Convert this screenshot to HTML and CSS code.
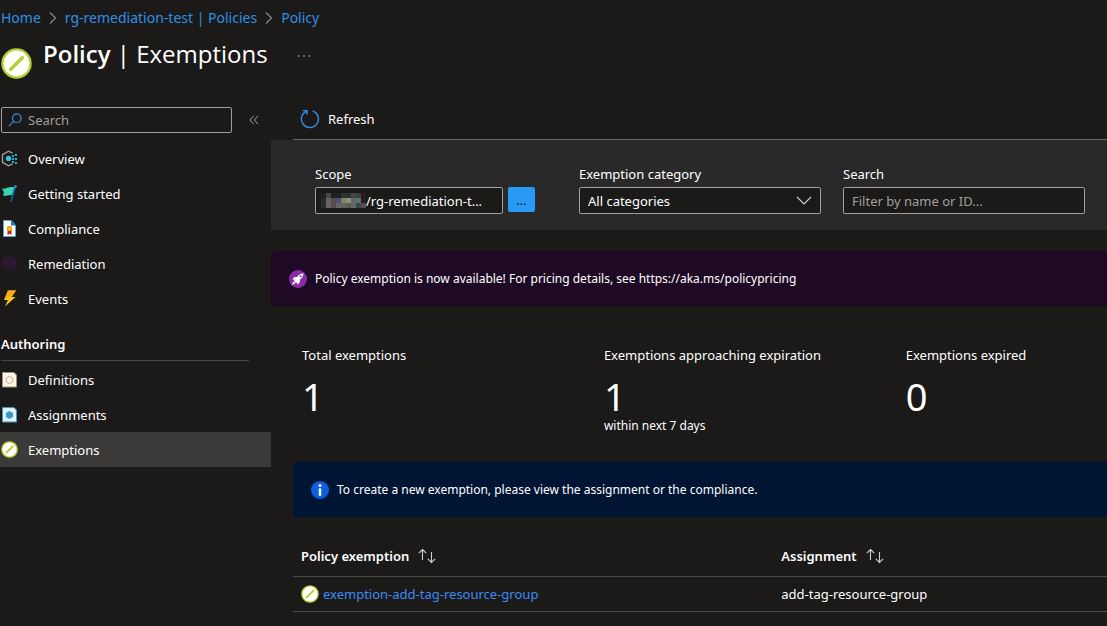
FILE: index.html
```html
<!DOCTYPE html>
<html lang="en">
<head>
<meta charset="utf-8">
<title>Policy | Exemptions</title>
<link rel="stylesheet" href="styles.css">
</head>
<body>
<svg class="defs" aria-hidden="true">
  <symbol id="exemption" viewBox="0 0 32 32">
    <circle cx="16" cy="16" r="14.500" fill="#fff" stroke="#b4cf30" stroke-width="2.400"/>
    <path d="M10 22 22 10" stroke="#b4cf30" stroke-width="3.600" stroke-linecap="round"/>
  </symbol>
  <symbol id="chevron" viewBox="0 0 8 14">
    <path d="M1 1.500 6.500 7 1 12.500" fill="none" stroke="#8a8886" stroke-width="1.200"/>
  </symbol>
  <symbol id="sort" viewBox="0 0 18 16">
    <path d="M4.500 12V1.500M.8 5.200 4.500 1.500 8.200 5.200M13.500 4v10.500M9.800 10.800l3.700 3.700 3.700-3.700" fill="none" stroke="#d2d0ce" stroke-width="1.100"/>
  </symbol>
</svg>
<header class="header">
  <nav class="breadcrumb" aria-label="Breadcrumb">
    <a href="#">Home</a>
    <svg class="crumb-sep"><use href="#chevron"/></svg>
    <a href="#">rg-remediation-test | Policies</a>
    <svg class="crumb-sep"><use href="#chevron"/></svg>
    <a href="#">Policy</a>
  </nav>
  <div class="title-row">
    <svg class="title-icon"><use href="#exemption"/></svg>
    <h1 class="title"><strong>Policy</strong> | Exemptions</h1>
    <button class="more" type="button" aria-label="More">
      <svg width="14" height="4" viewBox="0 0 14 4" fill="#d2d0ce"><circle cx="2" cy="2" r=".8"/><circle cx="7" cy="2" r=".8"/><circle cx="12" cy="2" r=".8"/></svg>
    </button>
  </div>
</header>
<div class="layout">
  <aside class="sidebar">
    <div class="menu-search">
      <label class="search-box">
        <svg width="14" height="14" viewBox="0 0 14 14" fill="none" stroke="#2f8fe6" stroke-width="1.200"><circle cx="8.800" cy="5.200" r="4.300"/><path d="M5.700 8.300.8 13.200"/></svg>
        <input type="text" placeholder="Search" aria-label="Search menu">
      </label>
      <button class="collapse" type="button" aria-label="Collapse menu">
        <svg width="10" height="10" viewBox="0 0 10 10" fill="none" stroke="#a19f9d"><path d="M4.800.8.8 5l4 4.200M9.200.8 5.200 5l4 4.200"/></svg>
      </button>
    </div>
    <nav aria-label="Policy menu">
      <ul class="menu">
        <li><a href="#">
          <svg class="icon" viewBox="0 0 17 17"><path d="M11 3.500V3L7.500 1.200 1.500 4.700v7.600l6 3.500L11 14v-.5" fill="none" stroke="#a3a3a3" stroke-width="1.300"/><circle cx="7.500" cy="8.500" r="2.700" fill="#32bedd"/><g fill="#2ba9cf"><rect x="11" y="5" width="2" height="2"/><rect x="14" y="4" width="2" height="2"/><rect x="11" y="8" width="2" height="2"/><rect x="14" y="8" width="2" height="2"/><rect x="11" y="11" width="2" height="2"/><rect x="14" y="12" width="2" height="2"/></g></svg>
          Overview</a></li>
        <li><a href="#">
          <svg class="icon" viewBox="0 0 17 17"><path d="M1 3.500c4 .8 6-2.500 12.500-1.300l-2.300 8c-3.500-1-6 1.500-9.200.3l1-3.200z" fill="#35d5b5"/><path d="M14.300 1.500 10 16.500" stroke="#1267b4" stroke-width="1.500"/><circle cx="14.500" cy="1.500" r="1.300" fill="#3b94df"/></svg>
          Getting started</a></li>
        <li><a href="#">
          <svg class="icon" viewBox="0 0 17 17"><path d="M2.500.5h8l4 5v11h-12z" fill="#fff" stroke="#5ea0d8"/><path d="M10 0 15 5.500h-5z" fill="#1d78cd"/><path d="M6.500 9h4v6l-2-1.200-2 1.200z" fill="#c3202f"/><circle cx="8.500" cy="8.500" r="2.700" fill="#f59a1b"/><circle cx="8.500" cy="8.500" r="1.200" fill="#ffca2a"/></svg>
          Compliance</a></li>
        <li><a href="#">
          <svg class="icon" viewBox="0 0 17 17"><circle cx="8.500" cy="8.500" r="8.300" fill="#29192c"/><path d="m2 4 6 4.500L15 4v6l-3-2-3.500 3L5 8l-3 3z" fill="#351539"/></svg>
          Remediation</a></li>
        <li><a href="#">
          <svg class="icon" viewBox="0 0 17 17"><path d="M7 .5h8L10.500 7h4L4 16.500 7 10H3z" fill="#fcc419"/><path d="M7 .5h8L10.500 7H4.300z" fill="#fca51d"/></svg>
          Events</a></li>
      </ul>
      <h2 class="menu-heading">Authoring</h2>
      <ul class="menu">
        <li><a href="#">
          <svg class="icon" viewBox="0 0 17 17"><path d="M1.500 1.500h11.500l2.500 2.500v12h-14z" fill="#fff4dc" stroke="#989287"/><path d="m8.500 5.300 3.200 1.900v3.700l-3.200 1.900-3.200-1.900V7.200z" fill="none" stroke="#b7b1a3"/></svg>
          Definitions</a></li>
        <li><a href="#">
          <svg class="icon" viewBox="0 0 17 17"><path d="M1.500 1.500h11.500l2.500 2.500v12h-14z" fill="#ddf1f8" stroke="#4796ba"/><path d="m8.500 5 3.500 2v4l-3.500 2L5 11V7z" fill="#3999c6"/></svg>
          Assignments</a></li>
        <li><a href="#" class="selected" aria-current="page">
          <svg class="icon"><use href="#exemption"/></svg>
          Exemptions</a></li>
      </ul>
    </nav>
  </aside>
  <main class="main">
    <div class="toolbar">
      <button class="refresh" type="button">
        <svg width="20" height="20" viewBox="0 0 20 20" fill="none" stroke="#2f8fe6" stroke-width="1.400"><path d="M12.500 1.900A8.500 8.500 0 1 1 6.300 2.300M2.800 1.600H7v4.200"/></svg>
        Refresh
      </button>
    </div>
    <form class="filters">
      <div class="field">
        <label for="scope">Scope</label>
        <div class="scope-row">
          <div class="box scope-box">
            <svg class="mosaic" width="45" height="15" viewBox="0 0 45 15" shape-rendering="crispEdges" aria-hidden="true">
              <path fill="#202022" d="M0 0h5v5H0zM10 0h10v5H10z"/><path fill="#494846" d="M5 0h5v5H5zM30 0h5v5h-5z"/><path fill="#2d332f" d="M20 0h5v5h-5z"/><path fill="#293338" d="M25 0h5v5h-5z"/><path fill="#3a4042" d="M35 0h5v5h-5z"/><path fill="#2b1c1e" d="M40 0h5v10h-5z"/>
              <path fill="#2a2b31" d="M0 5h5v10H0z"/><path fill="#67655e" d="M5 5h5v10H5zM20 10h5v5h-5z"/><path fill="#594b50" d="M10 5h5v10h-5zM40 10h5v5h-5z"/><path fill="#505370" d="M15 5h5v5h-5z"/><path fill="#7d806f" d="M20 5h5v5h-5z"/><path fill="#8f8e79" d="M25 5h5v5h-5z"/><path fill="#656766" d="M30 5h5v10h-5zM15 10h5v5h-5z"/><path fill="#5a7475" d="M35 5h5v5h-5z"/><path fill="#585d54" d="M25 10h5v5h-5z"/><path fill="#36464c" d="M35 10h5v5h-5z"/>
            </svg>
            <input id="scope" type="text" value="/rg-remediation-t..." readonly>
          </div>
          <button class="browse" type="button" aria-label="Select scope">...</button>
        </div>
      </div>
      <div class="field">
        <label for="category">Exemption category</label>
        <div class="select-wrap">
          <select id="category" class="box"><option>All categories</option></select>
          <svg class="select-arrow" width="16" height="9" viewBox="0 0 16 9" fill="none" stroke="#d2d0ce" stroke-width="1.100"><path d="m1 1 7 7 7-7"/></svg>
        </div>
      </div>
      <div class="field">
        <label for="filter">Search</label>
        <input id="filter" class="box" type="text" placeholder="Filter by name or ID...">
      </div>
    </form>
    <div class="banner promo">
      <svg width="18" height="18" viewBox="0 0 18 18"><circle cx="9" cy="9" r="9" fill="#8a2da5"/><path d="M14.500 3.300c-3 .2-5.200 1.700-6.400 3.600l-2.800.2-2 2.400 2.300.2-.8 1.400 1.900 1.900 1.400-.8.200 2.500 2.500-2.100.1-2.800c2-1.400 3.400-3.500 3.600-6.500zM4.200 11.600l-1.400 3.300 3.400-1.300z" fill="#fff"/><circle cx="11.500" cy="6.300" r="1" fill="#8a2da5"/></svg>
      <span>Policy exemption is now available! For pricing details, see https://aka.ms/policypricing</span>
    </div>
    <section class="stats">
      <div><div class="stat-label">Total exemptions</div><div class="stat-value">1</div></div>
      <div><div class="stat-label">Exemptions approaching expiration</div><div class="stat-value">1</div><div class="stat-note">within next 7 days</div></div>
      <div><div class="stat-label">Exemptions expired</div><div class="stat-value">0</div></div>
    </section>
    <div class="banner info">
      <svg width="18" height="18" viewBox="0 0 18 18"><circle cx="9" cy="9" r="9" fill="#0b5fe0"/><circle cx="9" cy="4.600" r="1.500" fill="#fff"/><path d="M7.800 7.400h2.400v7.400H7.800z" fill="#fff"/></svg>
      <span>To create a new exemption, please view the assignment or the compliance.</span>
    </div>
    <table class="grid">
      <thead><tr>
        <th class="col-name" scope="col"><button type="button">Policy exemption <svg class="sort"><use href="#sort"/></svg></button></th>
        <th scope="col"><button type="button">Assignment <svg class="sort"><use href="#sort"/></svg></button></th>
      </tr></thead>
      <tbody><tr>
        <td><a href="#" class="row-link"><svg class="row-icon"><use href="#exemption"/></svg>exemption-add-tag-resource-group</a></td>
        <td>add-tag-resource-group</td>
      </tr></tbody>
    </table>
  </main>
</div>
</body>
</html>
```
FILE: styles.css
```css
* { box-sizing: border-box; }
body {
  margin: 0;
  background: #1b1a19;
  color: #fff;
  font: 13px/20px "Segoe UI", "Noto Sans", "Open Sans", sans-serif;
}
button, input, select { font: inherit; color: inherit; }
button { border: 0; padding: 0; background: none; }
a { color: inherit; text-decoration: none; }
svg { display: block; flex: none; }
.defs { position: absolute; width: 0; height: 0; }

.header { height: 95px; padding: 8px 1px 0; }
.breadcrumb { display: flex; align-items: center; gap: 8px; font-size: 14px; color: #2f8fe6; }
.crumb-sep { width: 8px; height: 14px; }
.title-row { display: flex; align-items: flex-start; padding-top: 8px; }
.title-icon { width: 31px; height: 31px; margin-top: 12px; }
.title { margin: 0 0 0 11px; font: 400 24px/36px "Segoe UI", "Open Sans", sans-serif; }
.title strong { font-weight: 600; }
.more { margin: 18px 0 0 29px; }

.layout { display: flex; align-items: flex-start; }
.sidebar { width: 271px; flex: none; padding-top: 12px; }
.menu-search { display: flex; align-items: center; padding: 0 12px 8px 1px; }
.search-box { display: flex; align-items: center; gap: 6px; flex: 1; height: 26px; padding: 0 6px; border: 1px solid #a19f9d; border-radius: 2px; }
.search-box input { min-width: 0; flex: 1; padding: 0; border: 0; outline: 0; background: none; }
.collapse { margin-left: 17px; }
::placeholder { color: #a19f9d; opacity: 1; }
.menu { margin: 0; padding: 0; list-style: none; }
.menu a { display: flex; align-items: center; gap: 10px; height: 35px; padding-left: 1px; }
.menu a.selected { background: #3b3a39; }
.icon { width: 17px; height: 17px; }
.menu-heading { margin: 12px 22px 1px 1px; padding: 6px 0; border-bottom: 1px solid #484644; font-size: 13px; line-height: 20px; font-weight: 600; }

.main { flex: 1; min-width: 0; }
.toolbar { margin-left: 22px; padding: 14px 7px 10px; border-bottom: 1px solid #6b6967; }
.refresh { display: flex; align-items: center; gap: 8px; }
.filters { display: grid; grid-template-columns: repeat(3, 1fr); gap: 22px; padding: 24px 22px 16px 44px; background: #292929; }
.field { min-width: 0; }
.field > label { display: block; margin-bottom: 3px; }
.box { width: 100%; height: 27px; padding: 0 8px; border: 1px solid #a19f9d; border-radius: 2px; background: #1b1a19; }
.scope-row { display: flex; gap: 5px; padding-right: 22px; }
.scope-box { display: flex; align-items: center; flex: 1; min-width: 0; padding: 0 5px; }
.scope-box input { min-width: 0; flex: 1; padding: 0; border: 0; outline: 0; background: none; }
.browse { width: 27px; height: 25px; border-radius: 2px; background: #2899f5; color: #1b1a19; }
.select-wrap { display: grid; align-items: center; }
.select-wrap > * { grid-area: 1 / 1; }
.select-wrap select { appearance: none; }
.select-arrow { justify-self: end; margin-right: 9px; pointer-events: none; }

.banner { display: flex; align-items: center; gap: 8px; height: 55px; padding: 0 18px; border-radius: 3px 0 0 3px; font-size: 12px; }
.promo { margin-top: 21px; background: #1f0a26; }
.info { margin-left: 22px; background: #001433; }
.stats { display: grid; grid-template-columns: 3fr 3fr 2fr; min-height: 156px; padding: 39px 0 0 31px; }
.stat-value { font-size: 38px; line-height: 48px; padding-top: 7px; }
.stat-note { font-size: 12px; line-height: 12px; }

.grid { width: calc(100% - 22px); margin: 19px 0 0 22px; border-collapse: collapse; table-layout: fixed; }
.grid th, .grid td { padding: 0 8px; border-bottom: 1px solid #484644; text-align: left; }
.grid th { height: 40px; font-weight: 600; }
.grid th button { display: flex; align-items: center; gap: 8px; }
.grid td { height: 35px; }
.col-name { width: 59%; }
.sort { width: 20px; height: 16px; }
.row-link { display: flex; align-items: center; gap: 4px; color: #3b8bf5; }
.row-icon { width: 18px; height: 18px; }
```
